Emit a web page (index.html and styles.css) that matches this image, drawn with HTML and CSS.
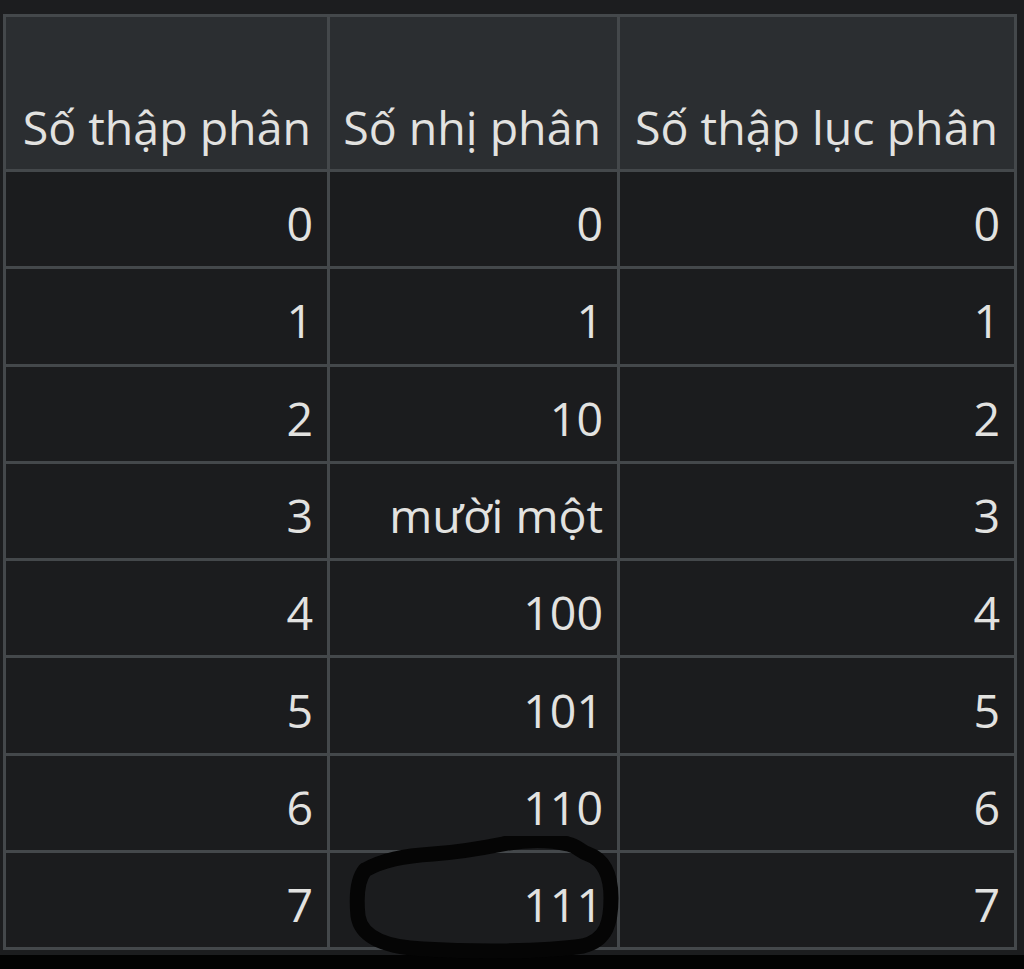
FILE: index.html
```html
<!DOCTYPE html>
<html lang="vi">
<head>
<meta charset="utf-8">
<title>Bảng số</title>
<link rel="stylesheet" href="styles.css">
</head>
<body>
<div class="page">
  <div class="wrap">
    <table class="num-table">
      <colgroup>
        <col class="c1"><col class="c2"><col class="c3">
      </colgroup>
      <thead>
        <tr><th>Số thập phân</th><th>Số nhị phân</th><th>Số thập lục phân</th></tr>
      </thead>
      <tbody>
        <tr><td>0</td><td>0</td><td>0</td></tr>
        <tr><td>1</td><td>1</td><td>1</td></tr>
        <tr><td>2</td><td>10</td><td>2</td></tr>
        <tr><td>3</td><td>mười một</td><td>3</td></tr>
        <tr><td>4</td><td>100</td><td>4</td></tr>
        <tr><td>5</td><td>101</td><td>5</td></tr>
        <tr><td>6</td><td>110</td><td>6</td></tr>
        <tr><td>7</td><td>111</td><td>7</td></tr>
      </tbody>
    </table>
    <svg class="scribble" width="290" height="140" viewBox="0 0 290 140">
      <path d="M22 34 C 40 24, 60 20, 90 18 C 120 16, 140 12, 160 8 C 180 4, 205 3, 225 8 C 235 10, 238 16, 245 18 C 262 24, 268 40, 268 62 C 268 86, 264 104, 240 110 C 200 116, 130 116, 80 113 C 40 111, 18 100, 15 80 C 13 60, 14 44, 22 34"
        fill="none" stroke="#050505" stroke-width="15" stroke-linecap="round" stroke-linejoin="round"/>
    </svg>
  </div>
  <div class="bottom-strip"></div>
</div>
</body>
</html>
```
FILE: styles.css
```css
html, body {
  margin: 0;
  padding: 0;
  background: #1c1d1f;
}
.page {
  display: flex;
  flex-direction: column;
  min-height: 969px;
  width: 1024px;
}
.wrap {
  position: relative;
  margin: 14px 0 0 3px;
  width: 1011px;
}
.num-table {
  border-collapse: collapse;
  table-layout: fixed;
  width: 1011px;
  font-family: "Open Sans", "Noto Sans", sans-serif;
  font-size: 46.5px;
  color: #e2e2e0;
}
.c1 { width: 324px; }
.c2 { width: 290px; }
.c3 { width: 397px; }
.num-table th,
.num-table td {
  border: 3px solid #44484b;
  text-align: right;
  padding: 0 14px 0 6px;
  white-space: nowrap;
}
.num-table th {
  background: #2b2e31;
  font-weight: 400;
  height: 155px;
  vertical-align: bottom;
  padding-right: 16px;
  padding-bottom: 10px;
  box-sizing: border-box;
}
.num-table td {
  background: #1b1c1e;
  height: 97.3px;
  box-sizing: border-box;
  vertical-align: middle;
  padding-top: 8px;
}
.scribble {
  position: absolute;
  left: 340px;
  top: 822px;
}
.bottom-strip {
  flex: 1;
  margin-top: 5px;
  background: #030303;
}
```
